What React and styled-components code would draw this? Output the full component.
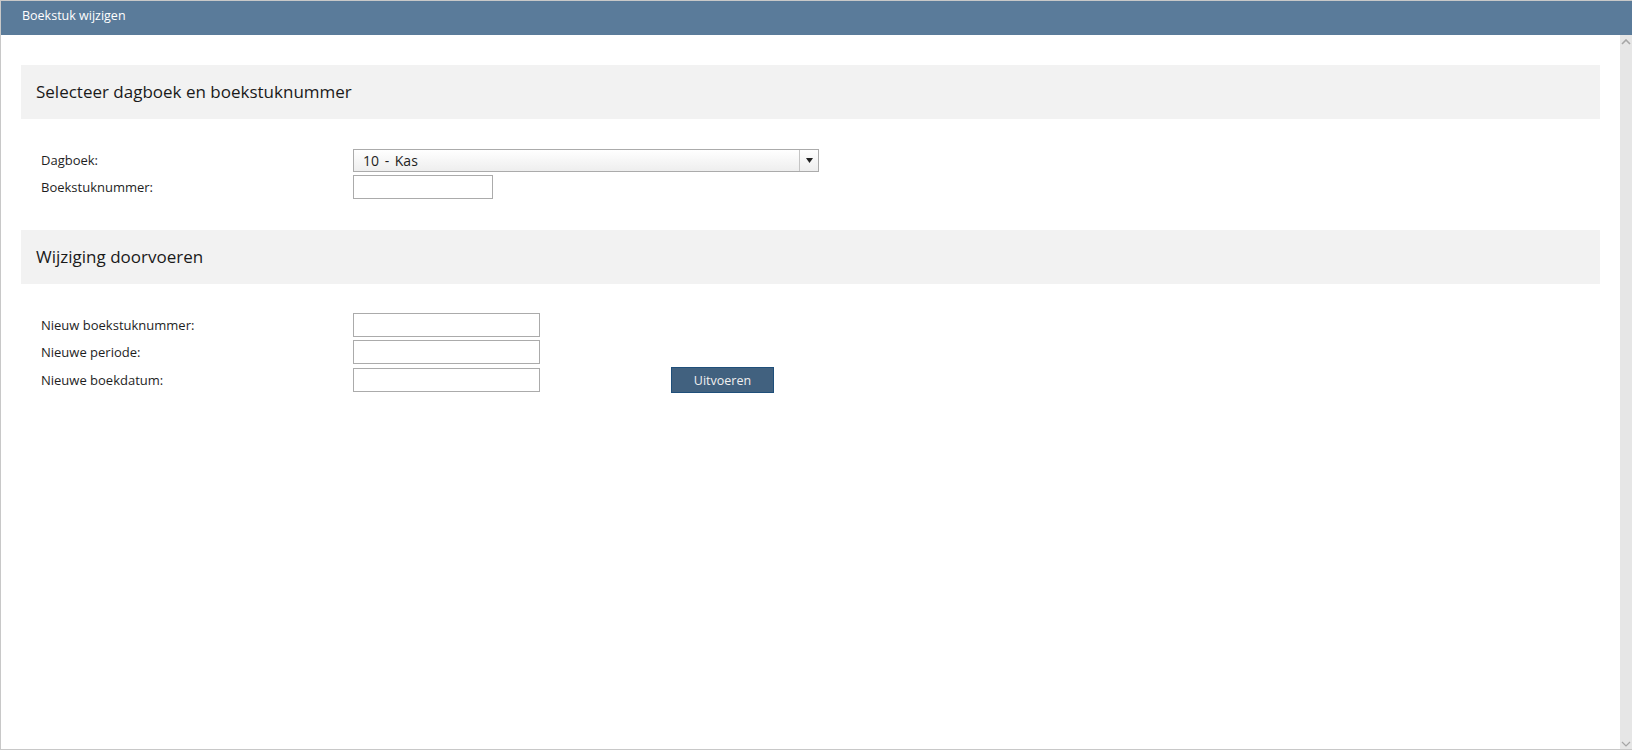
import React from 'react'
import styled, { createGlobalStyle } from 'styled-components'

const GlobalStyle = createGlobalStyle`
  html, body {
    margin: 0;
    padding: 0;
    background: #ffffff;
    font-family: "Open Sans", "Noto Sans", sans-serif;
    color: #1e1e1e;
  }
`

const App = () => {
  return (
    <>
      <GlobalStyle />
      <Frame>
        <TitleBar>Boekstuk wijzigen</TitleBar>
        <Body>
          <Content>
            <SectionHeader>Selecteer dagboek en boekstuknummer</SectionHeader>
            <Form>
              <Row>
                <Label>Dagboek:</Label>
                <Select>
                  <SelectValue>10 - Kas</SelectValue>
                  <SelectArrow>
                    <svg width="7" height="5" viewBox="0 0 7 5">
                      <path d="M0 0 H7 L3.5 5 Z" fill="#222" />
                    </svg>
                  </SelectArrow>
                </Select>
              </Row>
              <Row>
                <Label>Boekstuknummer:</Label>
                <Input $width={140} />
              </Row>
            </Form>

            <SectionHeader>Wijziging doorvoeren</SectionHeader>
            <Form>
              <Row>
                <Label>Nieuw boekstuknummer:</Label>
                <Input $width={187} />
              </Row>
              <Row>
                <Label>Nieuwe periode:</Label>
                <Input $width={187} />
              </Row>
              <Row>
                <Label>Nieuwe boekdatum:</Label>
                <Input $width={187} />
                <Button>Uitvoeren</Button>
              </Row>
            </Form>
          </Content>
          <Scrollbar>
            <svg width="10" height="6" viewBox="0 0 10 6">
              <path d="M1 5 L5 1 L9 5" stroke="#a6a6a6" strokeWidth="1.6" fill="none" />
            </svg>
            <svg width="10" height="6" viewBox="0 0 10 6">
              <path d="M1 1 L5 5 L9 1" stroke="#a6a6a6" strokeWidth="1.2" fill="none" />
            </svg>
          </Scrollbar>
        </Body>
      </Frame>
    </>
  )
}

const Frame = styled.div`
  box-sizing: border-box;
  height: 750px;
  border: 1px solid #c8c8c8;
  border-right: none;
  display: flex;
  flex-direction: column;
`

const TitleBar = styled.div`
  height: 34px;
  background-color: #5a7b9a;
  color: #ffffff;
  font-size: 12.5px;
  line-height: 29px;
  padding-left: 21px;
  flex-shrink: 0;
`

const Body = styled.div`
  flex: 1;
  display: flex;
  min-height: 0;
`

const Content = styled.div`
  flex: 1;
  padding: 30px 20px 0 20px;
`

const Scrollbar = styled.div`
  width: 12px;
  background-color: #e6e6e6;
  display: flex;
  flex-direction: column;
  justify-content: space-between;
  align-items: center;
  padding: 4px 0 2px;
  box-sizing: border-box;
`

const SectionHeader = styled.div`
  height: 54px;
  background-color: #f2f2f2;
  padding-left: 15px;
  font-size: 17px;
  line-height: 54px;
  color: #1a1a1a;
`

const Form = styled.div`
  padding: 29px 0 31px 20px;
  display: flex;
  flex-direction: column;
  gap: 3px;
`

const Row = styled.div`
  display: flex;
  align-items: center;
  min-height: 24px;
`

const Label = styled.div`
  width: 312px;
  font-size: 13px;
  color: #1e1e1e;
`

const Select = styled.div`
  box-sizing: border-box;
  width: 466px;
  height: 23px;
  border: 1px solid #ababab;
  background: linear-gradient(#ffffff, #eeeeee);
  display: flex;
`

const SelectValue = styled.div`
  flex: 1;
  font-size: 14px;
  word-spacing: 2px;
  line-height: 21px;
  padding-left: 9px;
`

const SelectArrow = styled.div`
  width: 18px;
  border-left: 1px solid #c4c4c4;
  display: flex;
  align-items: center;
  justify-content: center;
`

const Input = styled.div`
  box-sizing: border-box;
  width: ${(p) => p.$width}px;
  height: 24px;
  border: 1px solid #ababab;
  background: #ffffff;
`

const Button = styled.button`
  box-sizing: border-box;
  margin-left: 131px;
  width: 103px;
  height: 26px;
  background-color: #41617f;
  border: 1px solid #1f4f7a;
  color: #f0f0f0;
  font-family: "Open Sans", "Noto Sans", sans-serif;
  font-size: 12.5px;
  padding: 0;
`

export default App
